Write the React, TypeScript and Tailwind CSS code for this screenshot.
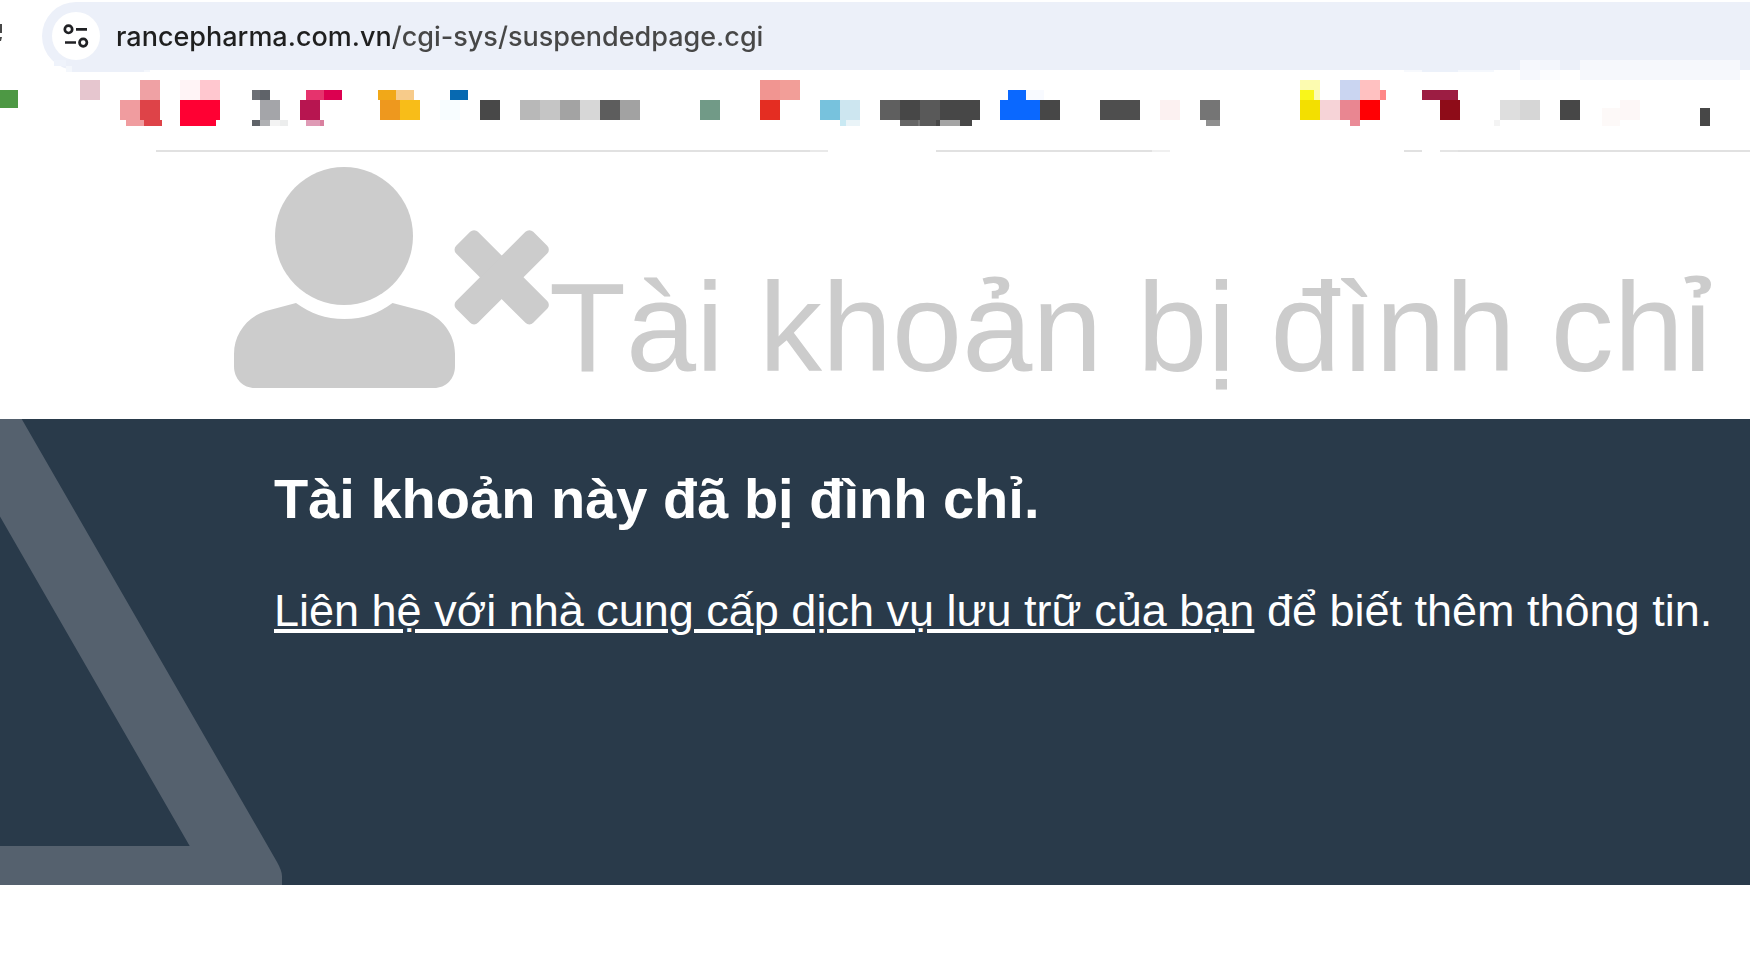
import { useState } from "react";

// x, y, width, height, colour
type Block = [number, number, number, number, string];

const BLOCKS: Block[] = [
  // edge of the address bar
  [54, 60, 12, 6, "#eff3fb"],
  [66, 66, 6, 6, "#f4f7fc"],
  [72, 66, 72, 6, "#ecf0f9"],
  [144, 70, 6, 2, "#f4f7fc"],
  [1404, 70, 18, 2, "#f7f9fd"],
  [1422, 70, 36, 2, "#ecf1fa"],
  [1458, 70, 36, 2, "#f5f8fd"],
  [1520, 60, 20, 20, "#f6f8fd"],
  [1540, 60, 20, 10, "#f3f6fc"],
  [1540, 70, 20, 10, "#fbfcfe"],
  [1580, 60, 160, 20, "#f6f8fc"],
  // bookmarks
  [0, 90, 18, 18, "#4d9844"],
  [80, 80, 20, 20, "#e6c6cf"],
  [140, 80, 20, 20, "#efa1a4"],
  [120, 100, 20, 20, "#f09c9f"],
  [140, 100, 20, 20, "#de4348"],
  [126, 120, 18, 6, "#f09c9f"],
  [144, 120, 18, 6, "#de4348"],
  [180, 80, 20, 20, "#fff4f6"],
  [200, 80, 20, 20, "#ffc7cf"],
  [180, 100, 40, 20, "#ff0033"],
  [180, 120, 36, 6, "#ff0033"],
  [252, 90, 8, 10, "#6c6f75"],
  [260, 90, 10, 10, "#5f6369"],
  [260, 100, 20, 20, "#a4a5a9"],
  [252, 120, 8, 6, "#5f6369"],
  [260, 120, 10, 6, "#b0b1b4"],
  [270, 120, 10, 6, "#f3f3f3"],
  [280, 120, 8, 6, "#eceded"],
  [306, 90, 18, 10, "#e6336d"],
  [324, 90, 18, 10, "#dc0050"],
  [300, 100, 20, 20, "#b71550"],
  [306, 120, 14, 6, "#df9ab5"],
  [320, 120, 4, 6, "#d9809f"],
  [378, 90, 18, 10, "#f1a818"],
  [396, 90, 18, 10, "#f7cb8a"],
  [380, 100, 20, 20, "#ee981e"],
  [400, 100, 20, 20, "#f8bd18"],
  [450, 90, 18, 10, "#0769b1"],
  [440, 100, 20, 20, "#f8fdff"],
  [480, 100, 20, 20, "#484848"],
  [520, 100, 20, 20, "#b8b8b8"],
  [540, 100, 20, 20, "#c5c5c5"],
  [560, 100, 20, 20, "#a3a3a3"],
  [580, 100, 20, 20, "#d7d7d7"],
  [600, 100, 20, 20, "#5d5d5d"],
  [620, 100, 20, 20, "#a2a2a2"],
  [700, 100, 20, 20, "#719a87"],
  [760, 80, 20, 20, "#f19591"],
  [780, 80, 20, 20, "#f29e98"],
  [760, 100, 20, 20, "#e42d22"],
  [820, 100, 20, 20, "#77c2dd"],
  [840, 100, 20, 20, "#cde6f0"],
  [840, 120, 6, 6, "#c9e9f3"],
  [846, 120, 14, 6, "#eaf4f8"],
  [880, 100, 20, 20, "#5f5f5f"],
  [900, 100, 20, 20, "#474747"],
  [920, 100, 20, 20, "#595959"],
  [940, 100, 40, 20, "#474747"],
  [900, 120, 18, 6, "#656565"],
  [918, 120, 2, 6, "#777777"],
  [920, 120, 16, 6, "#595959"],
  [936, 120, 4, 6, "#474747"],
  [940, 120, 20, 6, "#a4a4a4"],
  [960, 120, 12, 6, "#474747"],
  [1008, 90, 18, 10, "#0a68ff"],
  [1026, 90, 18, 10, "#f8faff"],
  [1000, 100, 40, 20, "#0a68ff"],
  [1040, 100, 20, 20, "#474747"],
  [1100, 100, 40, 20, "#4e4e4e"],
  [1160, 100, 20, 20, "#fcf1f1"],
  [1200, 100, 20, 20, "#757575"],
  [1206, 120, 14, 6, "#909090"],
  [1300, 80, 20, 20, "#fcfbb0"],
  [1300, 90, 14, 10, "#f9f61a"],
  [1300, 100, 20, 20, "#f3df00"],
  [1320, 100, 20, 20, "#f6d3d7"],
  [1340, 80, 20, 20, "#cad5f1"],
  [1360, 80, 20, 20, "#ffc1c1"],
  [1380, 90, 6, 10, "#ff8787"],
  [1340, 100, 20, 20, "#e98691"],
  [1360, 100, 20, 20, "#ff0004"],
  [1350, 120, 10, 6, "#ea8b97"],
  [1422, 90, 36, 10, "#9c1d43"],
  [1440, 100, 20, 20, "#8e0c18"],
  [1494, 120, 6, 6, "#f4f4f4"],
  [1500, 100, 20, 20, "#dedede"],
  [1520, 100, 20, 20, "#d6d6d6"],
  [1560, 100, 20, 20, "#474747"],
  [1602, 108, 18, 18, "#fdf9f8"],
  [1620, 100, 20, 20, "#fdf7f7"],
  [1700, 108, 10, 18, "#474747"],
  // divider under the bar
  [156, 150, 654, 2, "#e1e1e1"],
  [810, 150, 18, 2, "#e9e9e9"],
  [936, 150, 216, 2, "#e1e1e1"],
  [1152, 150, 18, 2, "#f0f0f0"],
  [1404, 150, 18, 2, "#e1e1e1"],
  [1440, 150, 18, 2, "#e5e5e5"],
  [1458, 150, 292, 2, "#e1e1e1"],
];

function SiteSettingsIcon() {
  return (
    <svg viewBox="0 0 26 26" className="h-[26px] w-[26px]" fill="none" stroke="#202124" strokeWidth="2.7" aria-hidden="true">
      <circle cx="5.500" cy="6.300" r="3.700" />
      <path d="M13 6.300h11M2 19.500h11" />
      <circle cx="20.200" cy="19.600" r="3.700" />
    </svg>
  );
}

function UserTimesIcon() {
  return (
    <svg viewBox="0 0 315 221" className="h-[221px] w-[315px] shrink-0" fill="#cccccc" aria-hidden="true">
      <circle cx="110" cy="69" r="69" />
      <path d="M62 136C77 146.500 91 152 110.500 152S144 146.500 158.500 136L189 144C208 150 221 167 221 187V199C221 212 212 221 200 221H21C9 221 0 212 0 199V187C0 167 13 150 32 144Z" />
      <g transform="translate(267.700 110.300)">
        <rect x="-54.500" y="-15.400" width="109" height="30.800" rx="5.500" transform="rotate(45)" />
        <rect x="-54.500" y="-15.400" width="109" height="30.800" rx="5.500" transform="rotate(-45)" />
      </g>
    </svg>
  );
}

function BrowserBar() {
  const [url, setUrl] = useState("rancepharma.com.vn/cgi-sys/suspendedpage.cgi");

  return (
    <header className="overflow-hidden">
      <div className="flex items-center pt-0.5">
        <svg viewBox="0 0 42 68" className="h-[68px] w-[42px] shrink-0" fill="#474747" aria-hidden="true">
          <path d="M0 22h2v9H0zM0 35h2l-1 4H0z" />
        </svg>
        <div className="flex h-[68px] min-w-0 flex-1 items-center rounded-l-full bg-[#ecf0f9] pl-2.5">
          <button
            type="button"
            aria-label="View site information"
            className="flex h-12 w-12 shrink-0 items-center justify-center rounded-full bg-white"
          >
            <SiteSettingsIcon />
          </button>
          <input
            type="text"
            aria-label="Address"
            value={url}
            onChange={(e) => setUrl(e.target.value)}
            spellCheck={false}
            className="ml-4 h-12 min-w-0 flex-1 bg-[linear-gradient(to_right,#1f1f1f_278px,#474747_278px)] bg-clip-text font-['Inter',sans-serif] text-[27px] font-medium text-transparent outline-none"
          />
        </div>
      </div>
      <svg
        viewBox="0 60 1750 92"
        className="pointer-events-none relative -mt-2.5 h-[92px] w-[1750px] max-w-none"
        shapeRendering="crispEdges"
        aria-hidden="true"
      >
        {BLOCKS.map(([x, y, width, height, fill]) => (
          <rect key={`${x}-${y}-${width}`} x={x} y={y} width={width} height={height} fill={fill} />
        ))}
      </svg>
    </header>
  );
}

export default function App() {
  return (
    <div className="min-h-screen overflow-x-hidden bg-white font-['Liberation_Sans',Arial,sans-serif]">
      <BrowserBar />
      <main>
        <div className="flex items-end pt-[15px] pb-[31px] pl-[234px] text-[#cccccc]">
          <UserTimesIcon />
          <h1 className="text-[126px] leading-[120px] whitespace-nowrap">Tài khoản bị đình chỉ</h1>
        </div>
        <section className="relative bg-[#293a4a] pt-12 pb-[250px] pl-[274px] text-white">
          <svg viewBox="0 0 282 466" className="absolute bottom-0 left-0 h-[466px] w-[282px]" fill="#55616e" aria-hidden="true">
            <path d="M0 0H21.700L277 443Q282 452 282 457V466H0V427H189.700L0 97.500Z" />
          </svg>
          <h2 className="relative text-[56px] leading-[64px] font-bold">Tài khoản này đã bị đình chỉ.</h2>
          <p className="relative mt-14 text-[45px] leading-[48px] whitespace-nowrap">
            <a href="#contact" className="underline decoration-4 underline-offset-3">
              Liên hệ với nhà cung cấp dịch vụ lưu trữ của bạn
            </a>{" "}
            để biết thêm thông tin.
          </p>
        </section>
      </main>
    </div>
  );
}
